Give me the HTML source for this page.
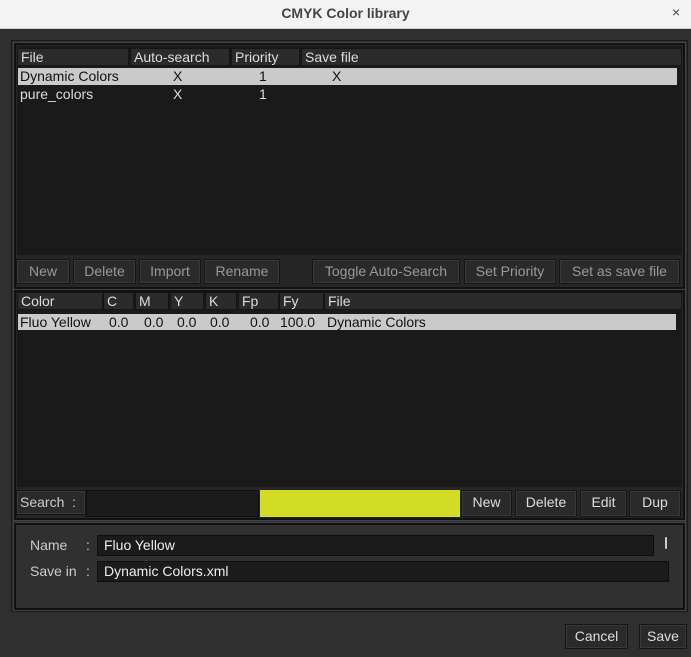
<!DOCTYPE html><html><head><style>
*{box-sizing:border-box;margin:0;padding:0}
body{width:691px;height:657px;background:#2f2f2f;font-family:"Liberation Sans",sans-serif;font-size:14px;color:#ddd;position:relative;overflow:hidden}
.a{position:absolute}
.tb{left:0;top:0;width:691px;height:29px;background:#f3f3f3;border-bottom:1px solid #cfcfcf;text-align:center;line-height:27px;font-weight:bold;color:#444;font-size:14px}
.frame{border:2px solid #111;box-shadow:0 0 0 1px #444}
.list{background:#1a1a1a}
.h{background:#2b2b2b;border:1px solid #151515;height:18px;line-height:16px;padding-left:3px;color:#ddd}
.sel{background:#cacaca;color:#111}
.btn{background:#2a2a2a;border:1px solid #151515;box-shadow:inset 0 0 0 1px #383838;text-align:center;line-height:23px;height:25px;color:#999}
.btn.e{color:#ddd}
.inp{background:#1b1b1b;border:1px solid #0e0e0e;height:21px;line-height:19px;padding-left:6px;color:#eee}
.k{color:#111;top:314px}
</style></head><body>
<div class="a tb">CMYK Color library</div>
<div class="a" style="left:672px;top:4px;color:#444;font-size:14px">×</div>
<div class="a" style="left:11px;top:40px;width:677px;height:572px;border:1px solid #1a1a1a"></div>
<div class="a frame" style="left:14px;top:43px;width:671px;height:246px;background:#262626"></div>
<div class="a list" style="left:17px;top:46px;width:665px;height:209px"></div>
<div class="a h" style="left:17px;top:48px;width:112px">File</div>
<div class="a h" style="left:130px;top:48px;width:100px">Auto-search</div>
<div class="a h" style="left:231px;top:48px;width:69px">Priority</div>
<div class="a h" style="left:301px;top:48px;width:381px">Save file</div>
<div class="a sel" style="left:18px;top:68px;width:659px;height:17px"></div>
<div class="a" style="left:20px;top:68px;color:#111">Dynamic Colors</div>
<div class="a" style="left:173px;top:68px;color:#111">X</div>
<div class="a" style="left:259px;top:68px;color:#111">1</div>
<div class="a" style="left:332px;top:68px;color:#111">X</div>
<div class="a" style="left:20px;top:86px">pure_colors</div>
<div class="a" style="left:173px;top:86px">X</div>
<div class="a" style="left:259px;top:86px">1</div>
<div class="a btn" style="left:16px;top:259px;width:54px">New</div>
<div class="a btn" style="left:73px;top:259px;width:63px">Delete</div>
<div class="a btn" style="left:139px;top:259px;width:62px">Import</div>
<div class="a btn" style="left:204px;top:259px;width:76px">Rename</div>
<div class="a btn" style="left:312px;top:259px;width:148px">Toggle Auto-Search</div>
<div class="a btn" style="left:464px;top:259px;width:92px">Set Priority</div>
<div class="a btn" style="left:559px;top:259px;width:121px">Set as save file</div>
<div class="a frame" style="left:14px;top:290px;width:671px;height:230px;background:#262626"></div>
<div class="a list" style="left:17px;top:292px;width:665px;height:195px"></div>
<div class="a h" style="left:17px;top:292px;width:86px">Color</div>
<div class="a h" style="left:103px;top:292px;width:31px">C</div>
<div class="a h" style="left:135px;top:292px;width:34px">M</div>
<div class="a h" style="left:170px;top:292px;width:34px">Y</div>
<div class="a h" style="left:205px;top:292px;width:32px">K</div>
<div class="a h" style="left:238px;top:292px;width:41px">Fp</div>
<div class="a h" style="left:279px;top:292px;width:45px">Fy</div>
<div class="a h" style="left:324px;top:292px;width:358px">File</div>
<div class="a sel" style="left:18px;top:314px;width:658px;height:16px"></div>
<div class="a k" style="left:20px">Fluo Yellow</div>
<div class="a k" style="left:109px">0.0</div>
<div class="a k" style="left:144px">0.0</div>
<div class="a k" style="left:177px">0.0</div>
<div class="a k" style="left:210px">0.0</div>
<div class="a k" style="left:250px">0.0</div>
<div class="a k" style="left:280px">100.0</div>
<div class="a k" style="left:327px">Dynamic Colors</div>
<div class="a btn e" style="left:16px;top:490px;width:70px;text-align:left;padding-left:3px;color:#ccc">Search&nbsp;&nbsp;:</div>
<div class="a" style="left:86px;top:490px;width:173px;height:27px;background:#1b1b1b;border:1px solid #0e0e0e"></div>
<div class="a" style="left:260px;top:490px;width:200px;height:27px;background:#d2dc24"></div>
<div class="a btn e" style="left:461px;top:490px;width:51px;height:27px">New</div>
<div class="a btn e" style="left:515px;top:490px;width:62px;height:27px">Delete</div>
<div class="a btn e" style="left:580px;top:490px;width:47px;height:27px">Edit</div>
<div class="a btn e" style="left:629px;top:490px;width:52px;height:27px">Dup</div>
<div class="a frame" style="left:14px;top:523px;width:671px;height:87px;background:#303030"></div>
<div class="a" style="left:30px;top:537px;color:#ccc">Name</div>
<div class="a" style="left:86px;top:537px;color:#ccc">:</div>
<div class="a inp" style="left:97px;top:535px;width:557px">Fluo Yellow</div>
<div class="a" style="left:665px;top:537px;width:2px;height:12px;background:#ccc;border-radius:1px"></div>
<div class="a" style="left:30px;top:563px;color:#ccc">Save in</div>
<div class="a" style="left:86px;top:563px;color:#ccc">:</div>
<div class="a inp" style="left:97px;top:561px;width:572px">Dynamic Colors.xml</div>
<div class="a btn e" style="left:565px;top:624px;width:63px;height:25px">Cancel</div>
<div class="a btn e" style="left:639px;top:624px;width:48px;height:25px">Save</div>
</body></html>
